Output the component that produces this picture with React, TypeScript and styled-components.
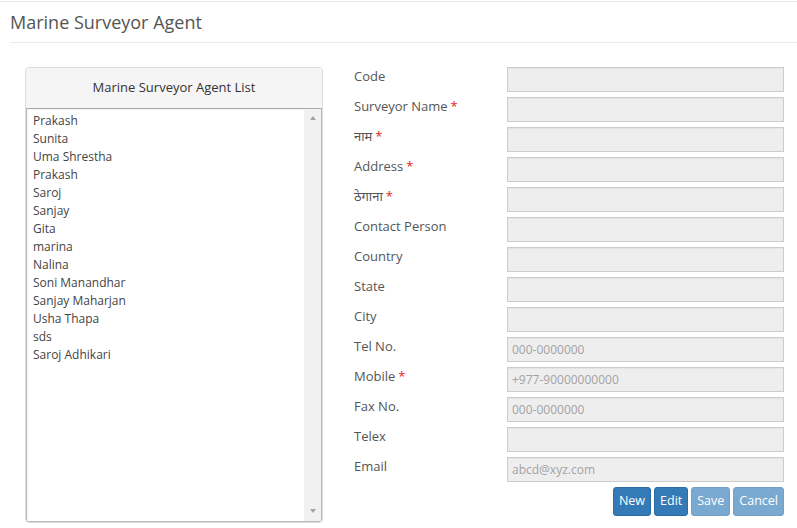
import React from "react";
import styled, { createGlobalStyle } from "styled-components";

const GlobalStyle = createGlobalStyle`
  html, body { margin: 0; padding: 0; background: #fff; }
  body {
    font-family: "Open Sans", "Noto Sans", "Noto Sans Devanagari", "Liberation Sans", sans-serif;
    color: #555;
    -webkit-font-smoothing: antialiased;
  }
  * { box-sizing: border-box; }
`;

const Page = styled.div`
  margin-top: 1px;
  border-top: 1px solid #ebebeb;
  width: 797px;
`;

const Title = styled.h1`
  margin: 0 0 0 10px;
  padding: 11px 0 9px;
  font-size: 18px;
  font-weight: 400;
  line-height: 19.8px;
  color: #555;
  border-bottom: 1px solid #ebebeb;
`;

const Content = styled.div`
  display: flex;
  align-items: flex-start;
  padding: 24px 13px 0 25px;
`;

const Panel = styled.section`
  width: 298px;
  height: 456px;
  border: 1px solid #dddddd;
  border-radius: 4px;
  display: flex;
  flex-direction: column;
  overflow: hidden;
`;

const PanelHeading = styled.div`
  background: #f5f5f5;
  padding: 10px 10px 12px;
  line-height: 18px;
  font-size: 13px;
  color: #333;
  text-align: center;
`;

const ListBox = styled.div`
  flex: 1;
  display: flex;
  border: 1px solid #b9b9b9;
  border-top-color: #a9a9a9;
  background: #fff;
  box-shadow: inset 1px 1px 1px rgba(0, 0, 0, 0.04);
`;

const Items = styled.ul`
  flex: 1;
  list-style: none;
  margin: 0;
  padding: 3px 6px;
`;

const Item = styled.li`
  font-size: 12px;
  line-height: 18px;
  color: #444;
`;

const Scrollbar = styled.div`
  width: 17px;
  background: #f1f1f1;
  display: flex;
  flex-direction: column;
  justify-content: space-between;
  align-items: center;
  padding: 7px 0 8px;
`;

const Arrow = styled.span<{ $down?: boolean }>`
  width: 0;
  height: 0;
  border-left: 3.5px solid transparent;
  border-right: 3.5px solid transparent;
  ${(p) =>
    p.$down
      ? "border-top: 4px solid #a3a3a3;"
      : "border-bottom: 4px solid #a3a3a3;"}
`;

const Form = styled.form`
  margin-left: 31px;
  display: grid;
  grid-template-columns: 153px 277px;
  row-gap: 5px;
`;

const Label = styled.label`
  font-size: 13px;
  line-height: 18px;
  color: #555;
`;

const Req = styled.span`
  color: #e31b1b;
  margin-left: 3px;
`;

const Input = styled.input`
  height: 25px;
  width: 277px;
  margin: 0;
  border: 1px solid #cccccc;
  background: #eeeeee;
  padding: 0 4px;
  font-family: inherit;
  font-size: 12px;
  color: #555;
  box-shadow: inset 0 1px 1px rgba(0, 0, 0, 0.04);
  &::placeholder { color: #a3a3a3; }
`;

const Actions = styled.div`
  grid-column: 1 / span 2;
  display: flex;
  justify-content: flex-end;
  gap: 3px;
`;

const Button = styled.button<{ $disabled?: boolean }>`
  height: 29px;
  padding: 0 5px;
  border: 1px solid #2e6da4;
  border-radius: 3px;
  background: #337ab7;
  color: #fff;
  font-family: inherit;
  font-size: 12.5px;
  line-height: 18px;
  opacity: ${(p) => (p.$disabled ? 0.65 : 1)};
`;

const agents = [
  "Prakash",
  "Sunita",
  "Uma Shrestha",
  "Prakash",
  "Saroj",
  "Sanjay",
  "Gita",
  "marina",
  "Nalina",
  "Soni Manandhar",
  "Sanjay Maharjan",
  "Usha Thapa",
  "sds",
  "Saroj Adhikari",
];

const fields: { label: string; req?: boolean; ph?: string }[] = [
  { label: "Code" },
  { label: "Surveyor Name", req: true },
  { label: "नाम", req: true },
  { label: "Address", req: true },
  { label: "ठेगाना", req: true },
  { label: "Contact Person" },
  { label: "Country" },
  { label: "State" },
  { label: "City" },
  { label: "Tel No.", ph: "000-0000000" },
  { label: "Mobile", req: true, ph: "+977-90000000000" },
  { label: "Fax No.", ph: "000-0000000" },
  { label: "Telex" },
  { label: "Email", ph: "abcd@xyz.com" },
];

export default function App() {
  return (
    <>
      <GlobalStyle />
      <Page>
        <Title>Marine Surveyor Agent</Title>
        <Content>
          <Panel>
            <PanelHeading>Marine Surveyor Agent List</PanelHeading>
            <ListBox>
              <Items>
                {agents.map((a, i) => (
                  <Item key={i}>{a}</Item>
                ))}
              </Items>
              <Scrollbar>
                <Arrow />
                <Arrow $down />
              </Scrollbar>
            </ListBox>
          </Panel>
          <Form onSubmit={(e) => e.preventDefault()}>
            {fields.map((f) => (
              <React.Fragment key={f.label}>
                <Label>
                  {f.label}
                  {f.req && <Req>*</Req>}
                </Label>
                <Input placeholder={f.ph} />
              </React.Fragment>
            ))}
            <Actions>
              <Button type="button">New</Button>
              <Button type="button">Edit</Button>
              <Button type="button" $disabled>
                Save
              </Button>
              <Button type="button" $disabled>
                Cancel
              </Button>
            </Actions>
          </Form>
        </Content>
      </Page>
    </>
  );
}
